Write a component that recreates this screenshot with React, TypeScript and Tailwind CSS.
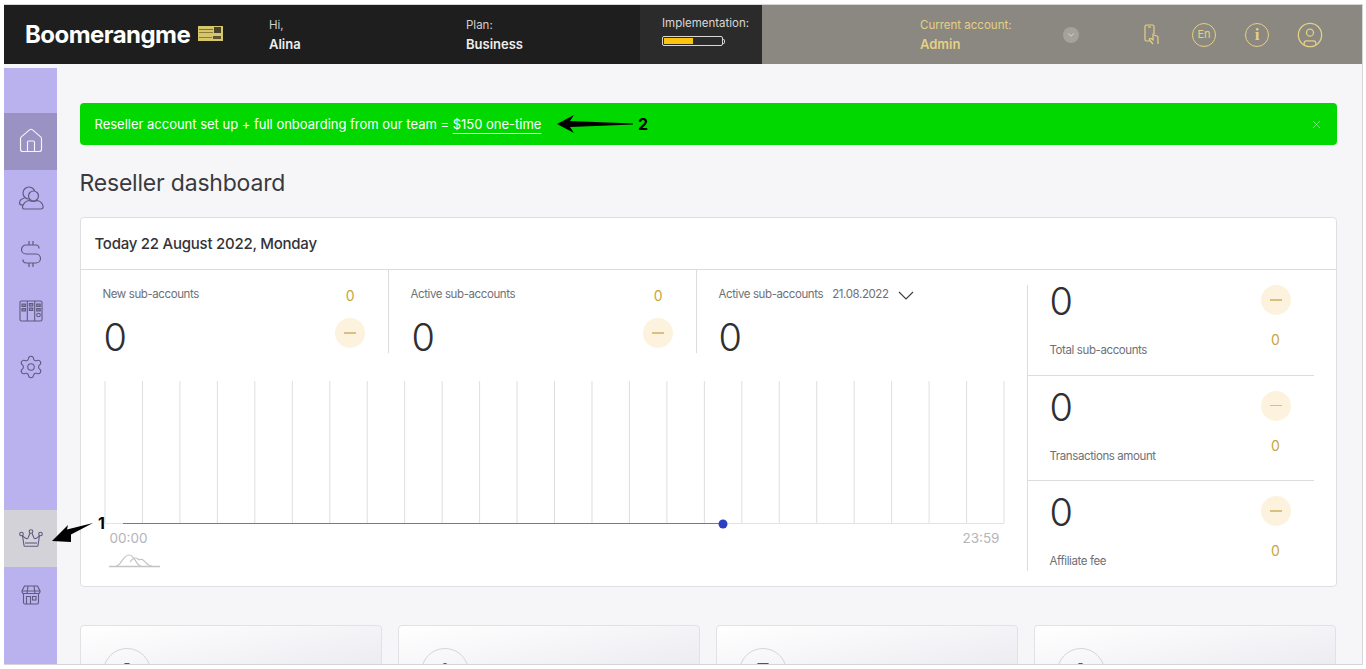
import { ChevronDown, CircleUser, Home, Settings, X } from "lucide-react";

const font = { fontFamily: "Inter, 'Noto Sans', sans-serif" };

function PhoneIcon() {
  return (
    <svg width="15" height="21" viewBox="0 0 15 21" fill="none" stroke="currentColor" strokeWidth="1.200">
      <path d="M5.500 17H2.500A1.500 1.500 0 0 1 1 15.500V2.500A1.500 1.500 0 0 1 2.500 1h6A1.500 1.500 0 0 1 10 2.500V10" />
      <path d="M4 3h3" />
      <path d="M9 20l-3.500-4c-.8-1 .4-2.200 1.400-1.400L9 16V9.500M10 11l3 1c1 .3 1 1 1 2v6" />
    </svg>
  );
}

function UsersIcon() {
  return (
    <svg width="26" height="26" viewBox="0 0 26 26" fill="none" stroke="#5f5a80" strokeWidth="1.200">
      <circle cx="11" cy="8" r="6" />
      <circle cx="15.500" cy="11" r="5" fill="#bab2ee" />
      <path d="M6.500 13c-3 .8-5 2.800-5 5 0 1.500 1.300 2 3 2h2" />
      <path d="M6 24c-1.500 0-1.800-1.500-1.300-3 1-3 3.500-5 6.300-5.500 2.500 1.200 6 1.200 8.500 0 2.800.8 5 2.800 5.500 5.500.3 1.800-.3 3-2 3z" fill="#bab2ee" />
    </svg>
  );
}

function DollarIcon() {
  return (
    <svg width="20" height="28" viewBox="0 0 20 28" fill="none" stroke="#5f5a80" strokeWidth="1.200">
      <path d="M18 8.500V8a3 3 0 0 0-3-3H5a3.500 3.500 0 0 0 0 9h10a4 4 0 0 1 0 9H5a3 3 0 0 1-3-3v-.5" />
      <path d="M8 1v4M12 1v4M8 23v4M12 23v4" />
    </svg>
  );
}

function BoardIcon() {
  return (
    <svg width="24" height="22" viewBox="0 0 24 22" fill="none" stroke="#5f5a80" strokeWidth="1.100">
      <rect x="1" y="1" width="22" height="20" rx="1.500" />
      <path d="M8.300 1v20M15.700 1v20" />
      <path d="M3 4h3.500v2.500H3zM3 8.500h3.500V11H3zM10.300 3.500h3.500V6h-3.500zM10.300 8h3.500v2.500h-3.500zM17.700 4h3.500v2.500h-3.500zM17.700 8.500h3.500V11h-3.500z" fill="#8c86ae" />
      <circle cx="19.500" cy="15" r="1.800" />
    </svg>
  );
}

function CrownIcon() {
  return (
    <svg width="24" height="18" viewBox="0 0 24 18" fill="none" stroke="#5f5a80" strokeWidth="1.100">
      <circle cx="2.500" cy="5" r="1.800" />
      <circle cx="12" cy="2.500" r="1.800" />
      <circle cx="21.500" cy="5" r="1.800" />
      <path d="M3.500 6.500L5 16.500a.8.800 0 0 0 .8.700h12.400a.8.800 0 0 0 .8-.7l1.500-10" />
      <path d="M3.500 6.500c2 2.500 4.500 4 5.500 2.500l2-4.800M20.500 6.500c-2 2.500-4.500 4-5.500 2.500l-2-4.800" />
      <path d="M6 14h12" />
    </svg>
  );
}

function StoreIcon() {
  return (
    <svg width="20" height="20" viewBox="0 0 20 20" fill="none" stroke="#5f5a80" strokeWidth="1.100">
      <path d="M3.500 1h13l2.500 5v.8a2 2 0 0 1-2 1.700H3a2 2 0 0 1-2-1.700V6z" />
      <path d="M1 6h18M7 1L6 8.500M13 1l1 7.500" />
      <path d="M2.500 8.500V17.500a1.500 1.500 0 0 0 1.500 1.500h12a1.500 1.500 0 0 0 1.500-1.500V8.500" />
      <path d="M5.500 19v-7.500h4V19" />
      <rect x="11.500" y="11.500" width="3.500" height="3.500" />
    </svg>
  );
}

function GoldBadge() {
  return (
    <div className="w-[25px] h-[15px] bg-[#d6c76a] flex flex-wrap gap-x-[1px] gap-y-[1px] p-[1px] items-start">
      <span className="w-[14px] h-[1px] mt-[2px] bg-[#7d7238]" />
      <span className="w-[7px] h-[6px] bg-[#45412a]" />
      <span className="w-[14px] h-[1px] -mt-[3px] bg-[#8c7f3a]" />
      <span className="w-[13px] h-[1px] mt-[1px] bg-[#8c7f3a]" />
      <span className="w-[8px] h-[3px] bg-[#5d5630]" />
    </div>
  );
}

function SideItem({ active, children }: { active?: string; children: React.ReactNode }) {
  return (
    <div className={`h-[56.5px] flex items-center justify-center ${active ?? ""}`}>
      {children}
    </div>
  );
}

function Delta() {
  return (
    <div className="w-[30px] h-[30px] rounded-full bg-[#fdf2de] flex items-center justify-center">
      <span className="w-[12px] h-[1.500px] bg-[#d8c07e]" />
    </div>
  );
}

function StatCol({ label, children, width }: { label: React.ReactNode; children?: React.ReactNode; width: string }) {
  return (
    <div className={`${width} h-[83px] pl-[22px] pr-[23px] pt-[17px]`}>
      <div className="flex items-center justify-between h-[16px]">
        <div className="text-[11.500px] tracking-[-0.4px] text-[#6f6f74] flex items-center gap-[9px]">{label}</div>
        {children}
      </div>
    </div>
  );
}

function SideStat({ label, top }: { label: string; top: string }) {
  return (
    <div className={`flex justify-between pl-[22px] pr-[23px] ${top}`}>
      <div>
        <div className="text-[38px] leading-[32px] font-light text-[#2f2f33]">0</div>
        <div className="mt-[25px] text-[11.500px] tracking-[-0.4px] leading-[16px] text-[#6f6f74]">{label}</div>
      </div>
      <div className="flex flex-col items-center">
        <Delta />
        <div className="mt-[16px] text-[14px] leading-[18px] text-[#c9a63c]">0</div>
      </div>
    </div>
  );
}

function BottomCard({ glyph }: { glyph: string }) {
  return (
    <div className="w-[302px] h-[60px] shrink-0 rounded-t-[4px] border border-[#e2e2e6] bg-gradient-to-br from-white to-[#e9e8ee] pl-[22px] pt-[22px]">
      <div className="w-[48px] h-[48px] rounded-full border border-[#d5d5da] flex justify-center items-start pt-[14px]">
        <span className={`h-[3px] bg-[#55555a] rounded-full ${glyph}`} />
      </div>
    </div>
  );
}

export default function App() {
  const gridXs = Array.from({ length: 25 }, (_, i) => 5 + i * 37.46);

  return (
    <div className="relative w-full h-[669px] bg-white overflow-hidden" style={font}>
      <div className="ml-[4px] mt-[4px] w-[1359px] h-[661px] border-t border-r border-b border-[#d6d6d8] flex flex-col overflow-hidden">
        {/* Header */}
        <header className="h-[59px] shrink-0 flex bg-[#1e1e1e] text-white">
          <div className="w-[636px] flex items-center">
            <div className="ml-[21px] w-[165px] text-[24px] font-bold tracking-[-0.55px] whitespace-nowrap">Boomerangme</div>
            <div className="ml-[8px] -mt-[2px]"><GoldBadge /></div>
            <div className="ml-[46px] w-[197px]">
              <div className="text-[11.500px] leading-[16px] text-[#cfcfcf]">Hi,</div>
              <div className="text-[13px] leading-[18px] mt-[2px] font-semibold text-[#eeeeee]">Alina</div>
            </div>
            <div>
              <div className="text-[11.500px] leading-[16px] text-[#cfcfcf]">Plan:</div>
              <div className="text-[13px] leading-[18px] mt-[2px] font-semibold text-[#eeeeee]">Business</div>
            </div>
          </div>
          <div className="w-[122px] bg-[#2b2b2b] pl-[22px] pt-[10px]">
            <div className="text-[11.500px] leading-[16px] text-[#d8d8d8] whitespace-nowrap">Implementation:</div>
            <div className="mt-[5px] flex items-center">
              <div className="w-[61px] h-[10px] rounded-[2px] border border-[#d8d8d8] p-[1px]">
                <div className="w-[29px] h-full bg-[#fcc30f]" />
              </div>
              <span className="w-[2px] h-[5px] rounded-r-sm border border-l-0 border-[#d8d8d8]" />
            </div>
          </div>
          <div className="flex-1 bg-[#8a8881] flex items-center text-[#e6d083]">
            <div className="ml-[158px] w-[143px]">
              <div className="text-[11.500px] leading-[16px]">Current account:</div>
              <div className="text-[13px] leading-[18px] mt-[2px] font-semibold">Admin</div>
            </div>
            <div className="w-[16px] h-[16px] rounded-full bg-[#a3a29c] flex items-center justify-center text-[#dddddd]">
              <ChevronDown size={10} />
            </div>
            <div className="ml-[65px] w-[15px] flex justify-center"><PhoneIcon /></div>
            <div className="ml-[33px] w-[24px] h-[24px] rounded-full border border-[#e6d083] flex items-center justify-center text-[11px]">En</div>
            <div className="ml-[29px] w-[24px] h-[24px] rounded-full border-[1.500px] border-[#e6d083] flex items-center justify-center text-[17px] font-bold leading-none" style={{ fontFamily: "'Liberation Serif', serif" }}>i</div>
            <div className="ml-[27px]"><CircleUser size={28} strokeWidth={1.100} /></div>
          </div>
        </header>

        {/* Body */}
        <div className="flex-1 flex min-h-0 bg-[#f6f6f9]">
          <aside className="w-[53px] shrink-0 mt-[4px] bg-[#bab2ee] pt-[45px] text-[#5f5a80]">
            <SideItem active="bg-[#9a92c2] text-[#f4f4fa]"><Home size={28} strokeWidth={1} /></SideItem>
            <SideItem><UsersIcon /></SideItem>
            <SideItem><DollarIcon /></SideItem>
            <SideItem><BoardIcon /></SideItem>
            <SideItem><Settings size={26} strokeWidth={1} /></SideItem>
            <div className="h-[114.500px]" />
            <SideItem active="bg-[#d3d2d8]"><CrownIcon /></SideItem>
            <SideItem><StoreIcon /></SideItem>
          </aside>

          <main className="flex-1 min-w-0 pl-[22.500px] pr-[25px] pt-[39px] overflow-hidden">
            <div className="h-[42px] rounded-[4px] bg-[#00d800] flex items-center justify-between pl-[15px] pr-[14px] text-white text-[13px]">
              <div className="pt-[1px] tracking-[-0.01px]">
                Reseller account set up + full onboarding from our team = <span className="underline underline-offset-[4px]">$150 one-time</span>
              </div>
              <X size={13} strokeWidth={1} className="text-[#c9f5c9]" />
            </div>

            <h1 className="mt-[22px] text-[23px] leading-[32px] font-normal text-[#3a3a3e] tracking-[-0.2px]">Reseller dashboard</h1>

            <section className="mt-[18px] h-[370px] rounded-[4px] border border-[#dfdfe3] bg-white">
              <div className="h-[52px] border-b border-[#dcdcdf] flex items-center pl-[14px] pt-[1px] text-[15px] tracking-[-0.25px] font-medium text-[#333337]">
                Today 22 August 2022, Monday
              </div>

              <div className="flex">
                <div className="w-[946px] shrink-0">
                  <div className="relative flex">
                    <div className="border-r border-[#dcdcdf] h-[83px]">
                      <StatCol width="w-[307px]" label="New sub-accounts">
                        <span className="text-[14px] text-[#c9a63c] mr-[10px]">0</span>
                      </StatCol>
                    </div>
                    <div className="border-r border-[#dcdcdf] h-[83px]">
                      <StatCol width="w-[307px]" label="Active sub-accounts">
                        <span className="text-[14px] text-[#c9a63c] mr-[10px]">0</span>
                      </StatCol>
                    </div>
                    <StatCol
                      width="w-[329px]"
                      label={
                        <>
                          Active sub-accounts <span>21.08.2022</span>
                          <svg width="16" height="9" viewBox="0 0 16 9" fill="none" stroke="#3a3a3e" strokeWidth="1.100"><path d="M1 1l7 7 7-7" /></svg>
                        </>
                      }
                    />
                    {/* Values that sit over the three stat columns */}
                    <div className="absolute left-[23px] top-[47px] text-[38px] leading-[40px] font-light text-[#2f2f33]">0</div>
                    <div className="absolute left-[331px] top-[47px] text-[38px] leading-[40px] font-light text-[#2f2f33]">0</div>
                    <div className="absolute left-[638px] top-[47px] text-[38px] leading-[40px] font-light text-[#2f2f33]">0</div>
                    <div className="absolute left-[254px] top-[48px]"><Delta /></div>
                    <div className="absolute left-[562px] top-[48px]"><Delta /></div>
                  </div>

                  <div className="mt-[28px] ml-[19px] w-[910px]">
                    <svg width="910" height="148" viewBox="0 0 910 148" fill="none">
                      {gridXs.map((x) => (
                        <line key={x} x1={x} x2={x} y1="0" y2="142" stroke="#dedee1" strokeWidth="1" />
                      ))}
                      <line x1="5" x2="904" y1="142.500" y2="142.500" stroke="#e3e3e6" />
                      <line x1="23" x2="623" y1="142.500" y2="142.500" stroke="#6a72d0" />
                      <circle cx="623" cy="143" r="4.500" fill="#2b3fc6" />
                    </svg>
                    <div className="mt-[1px] flex justify-between pl-[10px] pr-[10px] text-[13.500px] leading-[16px] text-[#b4b4b8]">
                      <span>00:00</span>
                      <span>23:59</span>
                    </div>
                    <svg className="mt-[8px] ml-[8px]" width="52" height="14" viewBox="0 0 52 14" fill="none" stroke="#c4c4c8" strokeWidth="1.200">
                      <path d="M1 12.500h51" strokeWidth="1.500" />
                      <path d="M8 12c5 0 7-11 13-11s7 11 12 11" />
                      <path d="M22 8c3-4 5-5 8-3 2 2 3-1 5 1 3 2 4 6 9 6" />
                    </svg>
                  </div>
                </div>

                <div className="w-[287px] shrink-0 mt-[15px] h-[286px] border-l border-[#dcdcdf]">
                  <div className="h-[91px] border-b border-[#dcdcdf]"><SideStat label="Total sub-accounts" top="pt-0" /></div>
                  <div className="h-[105px] border-b border-[#dcdcdf]"><SideStat label="Transactions amount" top="pt-[14.500px]" /></div>
                  <SideStat label="Affiliate fee" top="pt-[15px]" />
                </div>
              </div>
            </section>

            <div className="mt-[38px] flex gap-[16px]">
              <BottomCard glyph="w-[6px]" />
              <BottomCard glyph="w-[4px]" />
              <BottomCard glyph="w-[12px]" />
              <BottomCard glyph="w-[5px]" />
            </div>
          </main>
        </div>
      </div>

      {/* Annotation arrows over the screenshot */}
      <svg className="absolute left-[50px] top-[515px]" width="50" height="32" viewBox="0 0 50 32" fill="#000">
        <path d="M2 26 L18 10 L17 14.500 L43 8 L21 19.500 L21 27 Z" />
      </svg>
      <div className="absolute left-[98px] top-[514px] text-[16px] leading-[18px] font-bold text-black">1</div>
      <svg className="absolute left-[554px] top-[114px]" width="82" height="20" viewBox="0 0 82 20" fill="#000">
        <path d="M3 10 L20 1 L16 7 L79 9.600 L79 10.400 L16 13 L20 19 Z" />
      </svg>
      <div className="absolute left-[638px] top-[115px] text-[16px] leading-[18px] font-bold text-black">2</div>
    </div>
  );
}
